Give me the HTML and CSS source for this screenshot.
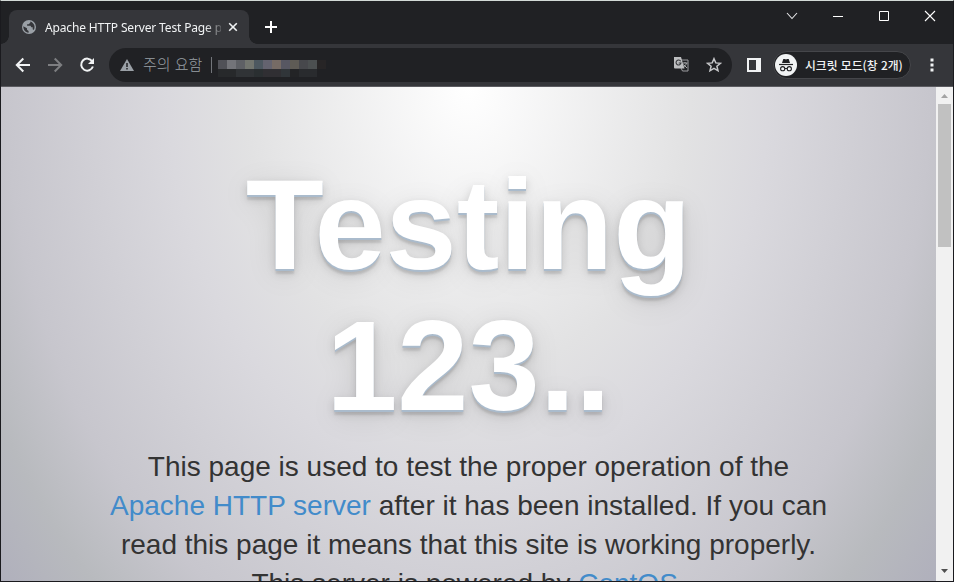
FILE: index.html
```html
<!DOCTYPE html>
<html lang="ko">
<head>
<meta charset="utf-8">
<title>Apache HTTP Server Test Page</title>
<link rel="stylesheet" href="styles.css">
</head>
<body>
<div class="window">
  <header class="titlebar">
    <div class="tab">
      <svg class="globe" width="14" height="14" viewBox="0 0 14 14"><circle cx="7" cy="7" r="7" fill="#9aa0a6"/><path d="M1.300 6.200 5 8.200v1.600l1.600 1.100v1.800C3.300 12.500 1.300 9.500 1.300 6.200zM8.300 1.400v1.300L6.600 4.200H5.100v1.500h3.400l.8 1.500h1.400v2l1 .8C13.600 7 12.300 2.500 8.300 1.400z" fill="#35363a"/></svg>
      <span class="tab-title">Apache HTTP Server Test Page p</span>
      <svg class="close" width="10" height="10" viewBox="0 0 10 10"><path d="M1.200 1.200l7.600 7.600M8.800 1.200L1.200 8.800" stroke="#f1f3f4" stroke-width="1.600"/></svg>
    </div>
    <svg class="plus" width="12" height="12" viewBox="0 0 12 12"><path d="M6 0v12M0 6h12" stroke="#fff" stroke-width="2"/></svg>
    <div class="controls">
      <svg width="12" height="12" viewBox="0 0 12 12"><path d="M1 3l5 5.500L11 3" fill="none" stroke="#e5e6e8" stroke-width="1.100"/></svg>
      <svg width="12" height="12" viewBox="0 0 12 12"><path d="M1 6.500h10" stroke="#fff"/></svg>
      <svg width="12" height="12" viewBox="0 0 12 12"><path d="M1.500 1.500h9v9h-9z" fill="none" stroke="#fff"/></svg>
      <svg width="12" height="12" viewBox="0 0 12 12"><path d="M1 1l10 10M11 1L1 11" stroke="#fff" stroke-width="1.100"/></svg>
    </div>
  </header>
  <nav class="toolbar">
    <svg class="nav" width="16" height="16" viewBox="0 0 16 16"><path d="M15 8H2M8.300 1.500L1.800 8l6.500 6.500" fill="none" stroke="#f1f3f4" stroke-width="2"/></svg>
    <svg class="nav" width="16" height="16" viewBox="0 0 16 16"><path d="M1 8h13M7.700 1.500L14.200 8l-6.500 6.500" fill="none" stroke="#7d7e81" stroke-width="2"/></svg>
    <svg class="nav" width="16" height="16" viewBox="0 0 16 16"><path d="M13.200 4.300A6 6 0 1 0 13.900 9.500" fill="none" stroke="#f1f3f4" stroke-width="2"/><path d="M15 1v6H9z" fill="#f1f3f4"/></svg>
    <div class="omnibox">
      <svg width="14" height="12" viewBox="0 0 14 12"><path d="M7 0l7 12H0z" fill="#9aa0a6"/><path d="M7 4v4M7 9v1.600" stroke="#202124" stroke-width="1.500"/></svg>
      <span class="warn">주의 요함</span>
      <span class="divider"></span>
      <svg class="mosaic" width="108" height="17" viewBox="0 7 108 17" shape-rendering="crispEdges">
        <path d="M0 7h9v9H0z" fill="#505157"/><path d="M9 7h9v9H9z" fill="#737479"/><path d="M18 7h9v9h-9z" fill="#5e6065"/><path d="M27 7h9v9h-9z" fill="#72756f"/><path d="M36 7h9v9h-9z" fill="#4d5860"/><path d="M45 7h9v9h-9z" fill="#64636f"/><path d="M54 7h9v9h-9z" fill="#766b65"/><path d="M63 7h9v9h-9z" fill="#575762"/><path d="M72 7h9v9h-9z" fill="#5e5b55"/><path d="M81 7h9v9h-9z" fill="#47484c"/><path d="M90 7h9v9h-9z" fill="#4c5051"/><path d="M99 7h9v9h-9z" fill="#272526"/>
        <path d="M0 16h18v8H0z" fill="#27292b"/><path d="M18 16h18v8H18z" fill="#303336"/><path d="M36 16h9v8h-9z" fill="#2a2f31"/><path d="M45 16h18v8H45z" fill="#302f33"/><path d="M63 16h9v8h-9z" fill="#303539"/><path d="M72 16h9v8h-9z" fill="#232426"/><path d="M81 16h18v8H81z" fill="#292b2e"/>
      </svg>
      <svg class="translate" width="15" height="15" viewBox="0 0 15 15"><path d="M6 3h8v11H8.500L7 11" fill="none" stroke="#9b9c9f"/><path d="M0 0h7l3.500 11.500H1a1 1 0 0 1-1-1z" fill="#bdbec0"/><path d="M6.700 4.200A2.500 2.500 0 1 0 7 6H4.700" fill="none" stroke="#35363a" stroke-width="1.100"/><path d="M8.500 6h5M11 5v1M12.500 6c-.4 2-1.500 3-3 4M9.500 7.500l3.500 3.500" fill="none" stroke="#aaabad"/></svg>
      <svg class="star" width="16" height="16" viewBox="0 0 16 16"><path d="M8 1.700l1.800 4.200 4.600.4-3.500 3 1.100 4.500L8 11.400l-4 2.400 1.100-4.500-3.500-3 4.600-.4z" fill="none" stroke="#c6c7c9" stroke-width="1.500"/></svg>
    </div>
    <svg class="panel" width="14" height="14" viewBox="0 0 14 14"><path d="M1 1h12v12H1z" fill="none" stroke="#f1f3f4" stroke-width="2"/><path d="M9 0h5v14H9z" fill="#f1f3f4"/></svg>
    <div class="incognito">
      <svg width="22" height="22" viewBox="0 0 22 22"><circle cx="11" cy="11" r="11" fill="#f1f3f4"/><path d="M7 9l1.300-4h1.500l1.200.5 1.200-.5h1.500L15 9z" fill="#202124"/><path d="M4 10.500h14" stroke="#202124" stroke-width="1.200"/><circle cx="7.700" cy="14.700" r="2.100" fill="none" stroke="#202124" stroke-width="1.100"/><circle cx="14.300" cy="14.700" r="2.100" fill="none" stroke="#202124" stroke-width="1.100"/><path d="M9.800 14.500h2.400" stroke="#202124"/></svg>
      <span>시크릿 모드(창 2개)</span>
    </div>
    <svg class="dots" width="4" height="14" viewBox="0 0 4 14"><path d="M.5.500h3v3h-3zM.500 5.500h3v3h-3zM.500 10.500h3v3h-3z" fill="#f1f3f4"/></svg>
  </nav>
  <div class="viewport">
    <main class="page">
      <h1>Testing<br>123..</h1>
      <p>This page is used to test the proper operation of the<br><a>Apache HTTP server</a> after it has been installed. If you can<br>read this page it means that this site is working properly.<br>This server is powered by <a>CentOS</a>.</p>
    </main>
    <aside class="scrollbar">
      <svg width="7" height="4" viewBox="0 0 7 4"><path d="M3.500 0L7 4H0z" fill="#a3a3a3"/></svg>
      <div class="thumb"></div>
      <svg class="down" width="7" height="4" viewBox="0 0 7 4"><path d="M0 0h7L3.500 4z" fill="#505050"/></svg>
    </aside>
  </div>
</div>
</body>
</html>
```
FILE: styles.css
```css
* { box-sizing: border-box; }
body { margin: 0; overflow: hidden; background: #202124; }
svg { display: block; flex: none; }
.window { width: 954px; height: 582px; display: flex; flex-direction: column; border: 1px solid #1a1a1e; border-top-color: #d3dad7; background: #202124; font-family: "Noto Sans", "Noto Sans CJK KR", sans-serif; }
.titlebar { height: 43px; display: flex; flex: none; }
.tab { position: relative; width: 240px; height: 34px; margin: 9px 0 0 8px; padding: 0 11px 0 13px; display: flex; align-items: center; border-radius: 8px 8px 0 0; background: #35363a; }
.tab::before, .tab::after { content: ""; position: absolute; bottom: 0; width: 8px; height: 8px; }
.tab::before { left: -8px; background: radial-gradient(circle at 0 0, transparent 7.5px, #35363a 8px); }
.tab::after { right: -8px; background: radial-gradient(circle at 100% 0, transparent 7.5px, #35363a 8px); }
.tab-title { width: 176px; margin-left: 9px; overflow: hidden; white-space: nowrap; font-size: 12px; letter-spacing: -0.15px; color: #f1f3f4; -webkit-mask-image: linear-gradient(90deg, #000 160px, transparent 180px); mask-image: linear-gradient(90deg, #000 160px, transparent 180px); }
.close { margin-left: 7px; }
.plus { margin: 20px 0 0 16px; }
.controls { display: flex; gap: 34px; margin: 9px 17px 0 auto; }
.toolbar { height: 43px; flex: none; display: flex; align-items: center; padding: 0 19px 1px 14px; background: #35363a; border-bottom: 1px solid #5b5b60; }
.nav { margin-right: 16px; }
.omnibox { width: 623px; height: 34px; margin-left: -2px; padding: 0 10px 0 11px; display: flex; align-items: center; border-radius: 17px; background: #202124; }
.warn { margin-left: 9px; width: 62px; font: 300 15px "Noto Sans CJK KR", sans-serif; line-height: 20px; margin-top: -2px; white-space: nowrap; color: #9aa0a6; }
.divider { width: 1px; height: 16px; margin: 0 6px 0 6px; background: #72757a; }
.mosaic { margin-top: 7px; }
.translate { margin-left: auto; }
.star { margin-left: 17px; }
.panel { margin-left: 15px; }
.incognito { width: 138px; height: 28px; margin-left: 12px; padding-left: 1px; display: flex; align-items: center; border: 1px solid #45464a; border-radius: 14px; background: #202124; font: 500 11.8px "Noto Sans CJK KR", sans-serif; color: #f1f3f4; }
.incognito span { margin-left: 8px; white-space: nowrap; }
.dots { margin-left: auto; }
.viewport { flex: 1; min-height: 0; display: flex; }
.page { flex: 1; padding-top: 68px; overflow: hidden; text-align: center; font-family: "Liberation Sans", Arial, sans-serif; color: #333; background: radial-gradient(ellipse 600px 780px at 50% 0, #fff 0%, #e2e2e3 37%, #dad9de 50%, #c7c6cd 77%, #b8babe 89%, #b0b0bc 100%); }
h1 { margin: 0 0 10px; font-size: 128px; line-height: 140.8px; font-weight: 700; color: #fff; text-shadow: 0 2px 0 #abc, 0 4px 10px rgba(0, 0, 0, .15), 0 5px 2px rgba(0, 0, 0, .1), 0 6px 30px rgba(0, 0, 0, .1); }
p { margin: 0; font-size: 28px; line-height: 39.2px; white-space: nowrap; }
a { color: #428bca; }
.scrollbar { width: 17px; flex: none; padding: 7px 2px 8px; display: flex; flex-direction: column; align-items: center; background: #f1f1f1; }
.thumb { width: 13px; height: 143px; margin-top: 6px; background: #c1c1c1; }
.down { margin-top: auto; }
```
